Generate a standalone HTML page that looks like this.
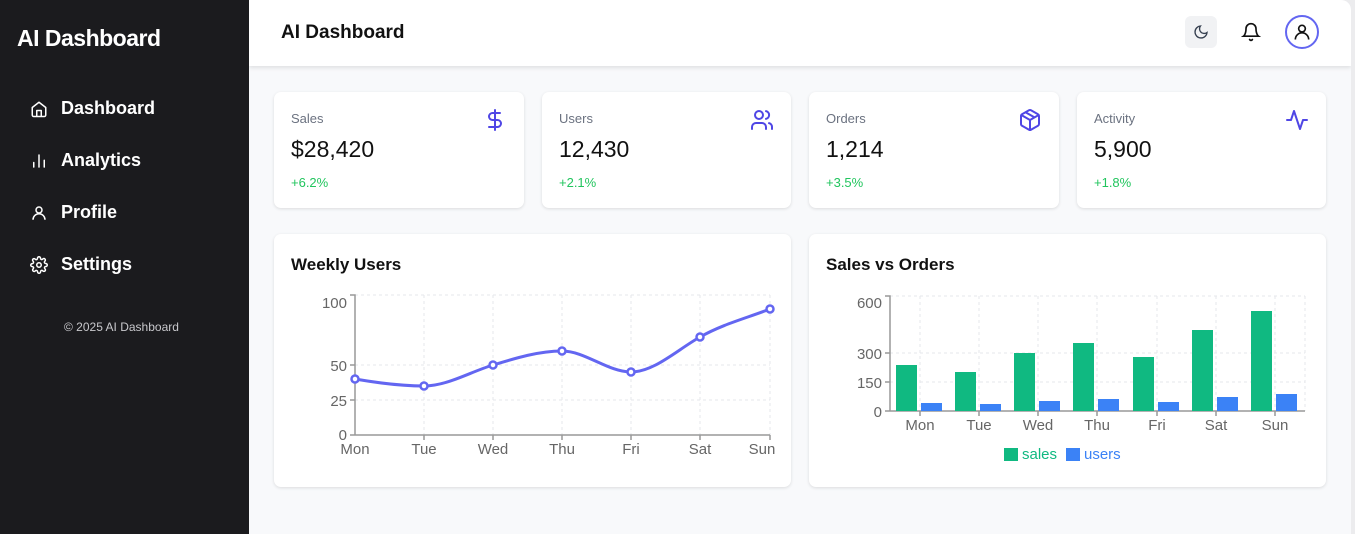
<!DOCTYPE html>
<html><head><meta charset="utf-8"><style>
*{box-sizing:border-box;margin:0;padding:0}
body{width:1355px;height:534px;overflow:hidden;font-family:"Liberation Sans",sans-serif;background:#ececee;position:relative}
.side{position:absolute;left:0;top:0;width:249px;height:534px;background:#1b1b1e;color:#fff}
.side h1{position:absolute;left:17px;top:25px;font-size:23px;font-weight:700;letter-spacing:-0.5px}
.nav{position:absolute;left:30px;display:flex;align-items:center;font-size:18px;font-weight:700}
.nav svg{width:18px;height:18px;margin-right:13px}
.copy{position:absolute;left:64px;top:320px;font-size:12px;color:#c8c8cc}
.main{position:absolute;left:249px;top:0;width:1102px;height:534px;background:#f8f9fb;border-top-right-radius:10px;overflow:hidden}
.hdr{position:absolute;left:0;top:0;width:1102px;height:66px;background:#fff;box-shadow:0 2px 4px rgba(0,0,0,.1)}
.hdr h2{position:absolute;left:32px;top:22px;font-size:19px;font-weight:700;color:#111}
.card{position:absolute;background:#fff;border-radius:7px;box-shadow:0 1px 3px rgba(0,0,0,.12)}
.lbl{position:absolute;left:17px;top:19px;font-size:13px;color:#6b7280}
.val{position:absolute;left:17px;top:44px;font-size:23px;color:#111}
.pct{position:absolute;left:17px;top:83px;font-size:13px;color:#22c55e}
.ic{position:absolute;right:17px;top:16px;width:24px;height:24px}
.ct{position:absolute;left:17px;top:21px;font-size:17px;font-weight:700;color:#111}
</style></head><body>
<div class="side">
<h1>AI Dashboard</h1>
<div class="nav" style="top:98px"><svg viewBox="0 0 24 24" fill="none" stroke="#fff" stroke-width="2" stroke-linejoin="round"><path d="M3 10l9-7 9 7v10a2 2 0 0 1-2 2H5a2 2 0 0 1-2-2z"/><path d="M9 22v-8h6v8"/></svg>Dashboard</div>
<div class="nav" style="top:150px"><svg viewBox="0 0 24 24" fill="none" stroke="#fff" stroke-width="2" stroke-linecap="round"><path d="M5 20v-6M12 20V4M19 20v-9"/></svg>Analytics</div>
<div class="nav" style="top:202px"><svg viewBox="0 0 24 24" fill="none" stroke="#fff" stroke-width="2"><circle cx="12" cy="8" r="4"/><path d="M4 21a8 8 0 0 1 16 0"/></svg>Profile</div>
<div class="nav" style="top:254px"><svg viewBox="0 0 24 24" fill="none" stroke="#fff" stroke-width="2"><circle cx="12" cy="12" r="3"/><path d="M19.4 15a1.7 1.7 0 0 0 .3 1.8l.1.1a2 2 0 1 1-2.8 2.8l-.1-.1a1.7 1.7 0 0 0-1.8-.3 1.7 1.7 0 0 0-1 1.5V21a2 2 0 1 1-4 0v-.1a1.7 1.7 0 0 0-1.1-1.5 1.7 1.7 0 0 0-1.8.3l-.1.1a2 2 0 1 1-2.8-2.8l.1-.1a1.7 1.7 0 0 0 .3-1.8 1.7 1.7 0 0 0-1.5-1H3a2 2 0 1 1 0-4h.1a1.7 1.7 0 0 0 1.5-1.1 1.7 1.7 0 0 0-.3-1.8l-.1-.1a2 2 0 1 1 2.8-2.8l.1.1a1.7 1.7 0 0 0 1.8.3H9a1.7 1.7 0 0 0 1-1.5V3a2 2 0 1 1 4 0v.1a1.7 1.7 0 0 0 1 1.5 1.7 1.7 0 0 0 1.8-.3l.1-.1a2 2 0 1 1 2.8 2.8l-.1.1a1.7 1.7 0 0 0-.3 1.8V9a1.7 1.7 0 0 0 1.5 1H21a2 2 0 1 1 0 4h-.1a1.7 1.7 0 0 0-1.5 1z"/></svg>Settings</div>
<div class="copy">© 2025 AI Dashboard</div>
</div>
<div class="main">
<div class="hdr"><h2>AI Dashboard</h2>
<div style="position:absolute;left:936px;top:16px;width:32px;height:32px;border-radius:6px;background:#f1f2f4"><svg viewBox="0 0 24 24" width="16" height="16" style="position:absolute;left:8px;top:8px" fill="none" stroke="#374151" stroke-width="2"><path d="M21 12.8A9 9 0 1 1 11.2 3a7 7 0 0 0 9.8 9.8z"/></svg></div>
<svg viewBox="0 0 24 24" width="20" height="20" style="position:absolute;left:992px;top:22px" fill="none" stroke="#111" stroke-width="2" stroke-linecap="round"><path d="M6 8a6 6 0 0 1 12 0c0 7 3 9 3 9H3s3-2 3-9"/><path d="M10.3 21a1.9 1.9 0 0 0 3.4 0"/></svg>
<div style="position:absolute;left:1036px;top:15px;width:34px;height:34px;border-radius:50%;border:2px solid #6366f1"><svg viewBox="0 0 24 24" width="20" height="20" style="position:absolute;left:5px;top:5px" fill="none" stroke="#111" stroke-width="2"><circle cx="12" cy="8" r="4"/><path d="M4 21a8 8 0 0 1 16 0"/></svg></div>
</div>
</div>
<div class="card" style="left:274px;top:92px;width:250px;height:116px"><div class="lbl">Sales</div><div class="val">$28,420</div><div class="pct">+6.2%</div><svg class="ic" viewBox="0 0 24 24" fill="none" stroke="#4f46e5" stroke-width="2" stroke-linecap="round"><path d="M12 2v20M17 5H9.5a3.5 3.5 0 0 0 0 7h5a3.5 3.5 0 0 1 0 7H6"/></svg></div>
<div class="card" style="left:542px;top:92px;width:249px;height:116px"><div class="lbl">Users</div><div class="val">12,430</div><div class="pct">+2.1%</div><svg class="ic" viewBox="0 0 24 24" fill="none" stroke="#4f46e5" stroke-width="2" stroke-linecap="round"><path d="M16 21v-2a4 4 0 0 0-4-4H6a4 4 0 0 0-4 4v2"/><circle cx="9" cy="7" r="4"/><path d="M22 21v-2a4 4 0 0 0-3-3.9M16 3.1a4 4 0 0 1 0 7.8"/></svg></div>
<div class="card" style="left:809px;top:92px;width:250px;height:116px"><div class="lbl">Orders</div><div class="val">1,214</div><div class="pct">+3.5%</div><svg class="ic" viewBox="0 0 24 24" fill="none" stroke="#4f46e5" stroke-width="2" stroke-linejoin="round"><path d="M21 16V8a2 2 0 0 0-1-1.7l-7-4a2 2 0 0 0-2 0l-7 4A2 2 0 0 0 3 8v8a2 2 0 0 0 1 1.7l7 4a2 2 0 0 0 2 0l7-4a2 2 0 0 0 1-1.7z"/><path d="M3.3 7L12 12l8.7-5M12 22V12M7.5 4.2l9 5.2"/></svg></div>
<div class="card" style="left:1077px;top:92px;width:249px;height:116px"><div class="lbl">Activity</div><div class="val">5,900</div><div class="pct">+1.8%</div><svg class="ic" viewBox="0 0 24 24" fill="none" stroke="#4f46e5" stroke-width="2" stroke-linecap="round" stroke-linejoin="round"><path d="M22 12h-4l-3 9L9 3l-3 9H2"/></svg></div>
<div class="card" style="left:274px;top:234px;width:517px;height:253px"><div class="ct">Weekly Users</div></div>
<div class="card" style="left:809px;top:234px;width:517px;height:253px"><div class="ct">Sales vs Orders</div></div>
<svg width="1355" height="534" style="position:absolute;left:0;top:0" font-family="Liberation Sans, sans-serif" font-size="15" fill="#666">
<g stroke="#e5e7eb" stroke-dasharray="3 3">
<path d="M355 295H770M355 365H770M355 400H770M424 295V435M493 295V435M562 295V435M631 295V435M700 295V435M770 295V435"/>
<path d="M890 296H1305M890 353H1305M890 382H1305M920 296V411M979 296V411M1038 296V411M1097 296V411M1157 296V411M1216 296V411M1275 296V411M1305 296V411"/>
</g>
<g stroke="#999" stroke-width="1.5" fill="none"><path d="M350 295H355V435H770M350 365H355M350 400H355M350 435H355M424 435v5M493 435v5M562 435v5M631 435v5M700 435v5M770 435v5"/>
<path d="M885 296H890V411H1305M885 353H890M885 382H890M885 411H890M920 411v5M979 411v5M1038 411v5M1097 411v5M1157 411v5M1216 411v5M1275 411v5"/></g>
<g text-anchor="end"><text x="347" y="308">100</text><text x="347" y="371">50</text><text x="347" y="406">25</text><text x="347" y="440">0</text>
<text x="882" y="308">600</text><text x="882" y="359">300</text><text x="882" y="388">150</text><text x="882" y="417">0</text></g>
<g text-anchor="middle"><text x="355" y="454">Mon</text><text x="424" y="454">Tue</text><text x="493" y="454">Wed</text><text x="562" y="454">Thu</text><text x="631" y="454">Fri</text><text x="700" y="454">Sat</text><text x="762" y="454">Sun</text>
<text x="920" y="430">Mon</text><text x="979" y="430">Tue</text><text x="1038" y="430">Wed</text><text x="1097" y="430">Thu</text><text x="1157" y="430">Fri</text><text x="1216" y="430">Sat</text><text x="1275" y="430">Sun</text></g>
<path d="M355,379 C378,383 401,386 424,386 C447,386 470,372 493,365 C516,358 539,351 562,351 C585,351 608,372 631,372 C654,372 677,350 700,337 C723,324 747,318 770,309" fill="none" stroke="#6366f1" stroke-width="3"/>
<g fill="#fff" stroke="#6366f1" stroke-width="2.5"><circle cx="355" cy="379" r="3.5"/><circle cx="424" cy="386" r="3.5"/><circle cx="493" cy="365" r="3.5"/><circle cx="562" cy="351" r="3.5"/><circle cx="631" cy="372" r="3.5"/><circle cx="700" cy="337" r="3.5"/><circle cx="770" cy="309" r="3.5"/></g>
<g fill="#10b981"><rect x="896" y="365" width="21" height="46"/><rect x="955" y="372" width="21" height="39"/><rect x="1014" y="353" width="21" height="58"/><rect x="1073" y="343" width="21" height="68"/><rect x="1133" y="357" width="21" height="54"/><rect x="1192" y="330" width="21" height="81"/><rect x="1251" y="311" width="21" height="100"/>
<rect x="1004" y="448" width="14" height="13"/></g>
<g fill="#3b82f6"><rect x="921" y="403" width="21" height="8"/><rect x="980" y="404" width="21" height="7"/><rect x="1039" y="401" width="21" height="10"/><rect x="1098" y="399" width="21" height="12"/><rect x="1158" y="402" width="21" height="9"/><rect x="1217" y="397" width="21" height="14"/><rect x="1276" y="394" width="21" height="17"/>
<rect x="1066" y="448" width="14" height="13"/></g>
<text x="1022" y="459" fill="#10b981">sales</text><text x="1084" y="459" fill="#3b82f6">users</text>
</svg>
</body></html>
